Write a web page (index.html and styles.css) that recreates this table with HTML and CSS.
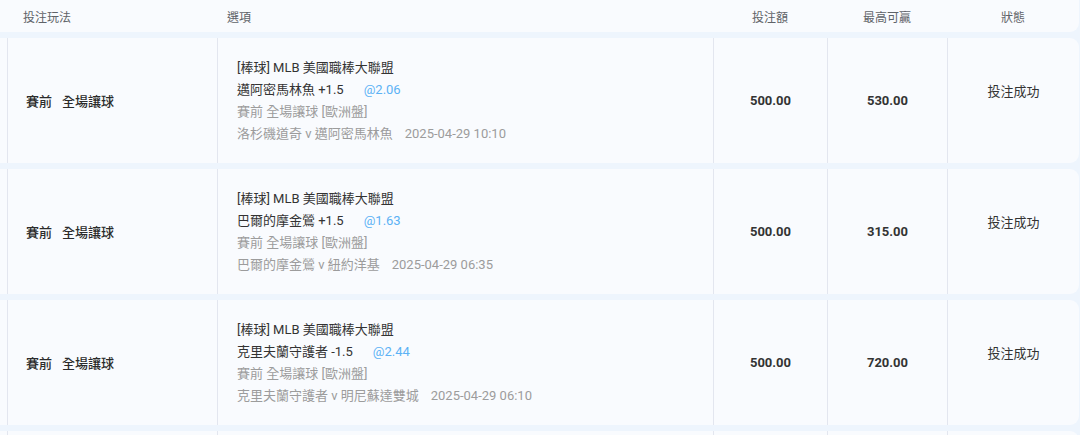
FILE: index.html
```html
<!DOCTYPE html>
<html lang="zh-Hant">
<head>
<meta charset="utf-8">
<title>投注紀錄</title>
<link rel="stylesheet" href="styles.css">
</head>
<body>
<div class="table">
  <div class="head">
    <div class="hc hc-edge"></div>
    <div class="hc hc-type">投注玩法</div>
    <div class="hc hc-opt">選項</div>
    <div class="hc hc-center">投注額</div>
    <div class="hc hc-center">最高可贏</div>
    <div class="hc hc-center">狀態</div>
  </div>

  <div class="row">
    <div class="cell edge"></div>
    <div class="cell type"><span>賽前</span><span class="gap">全場讓球</span></div>
    <div class="cell opt">
      <div class="line dark">[棒球] MLB 美國職棒大聯盟</div>
      <div class="line dark">邁阿密馬林魚 +1.5<span class="odds">@2.06</span></div>
      <div class="line grey">賽前 全場讓球 [歐洲盤]</div>
      <div class="line grey">洛杉磯道奇 v 邁阿密馬林魚<span class="date">2025-04-29 10:10</span></div>
    </div>
    <div class="cell amt">500.00</div>
    <div class="cell amt">530.00</div>
    <div class="cell status">投注成功</div>
  </div>

  <div class="row">
    <div class="cell edge"></div>
    <div class="cell type"><span>賽前</span><span class="gap">全場讓球</span></div>
    <div class="cell opt">
      <div class="line dark">[棒球] MLB 美國職棒大聯盟</div>
      <div class="line dark">巴爾的摩金鶯 +1.5<span class="odds">@1.63</span></div>
      <div class="line grey">賽前 全場讓球 [歐洲盤]</div>
      <div class="line grey">巴爾的摩金鶯 v 紐約洋基<span class="date">2025-04-29 06:35</span></div>
    </div>
    <div class="cell amt">500.00</div>
    <div class="cell amt">315.00</div>
    <div class="cell status">投注成功</div>
  </div>

  <div class="row">
    <div class="cell edge"></div>
    <div class="cell type"><span>賽前</span><span class="gap">全場讓球</span></div>
    <div class="cell opt">
      <div class="line dark">[棒球] MLB 美國職棒大聯盟</div>
      <div class="line dark">克里夫蘭守護者 -1.5<span class="odds">@2.44</span></div>
      <div class="line grey">賽前 全場讓球 [歐洲盤]</div>
      <div class="line grey">克里夫蘭守護者 v 明尼蘇達雙城<span class="date">2025-04-29 06:10</span></div>
    </div>
    <div class="cell amt">500.00</div>
    <div class="cell amt">720.00</div>
    <div class="cell status">投注成功</div>
  </div>

  <div class="row">
    <div class="cell edge"></div>
    <div class="cell type"></div>
    <div class="cell opt"></div>
    <div class="cell amt"></div>
    <div class="cell amt"></div>
    <div class="cell status"></div>
  </div>
</div>
</body>
</html>
```

FILE: styles.css
```css
html, body {
  margin: 0;
  padding: 0;
  background: #eef5fd;
  overflow: hidden;
}

body {
  font-family: Roboto, "Noto Sans CJK TC", "Noto Sans", sans-serif;
  font-size: 13px;
  color: #333333;
}

.table {
  width: 1079px;
  display: flex;
  flex-direction: column;
  gap: 6px;
}

.head,
.row {
  display: grid;
  grid-template-columns: 7px 210px 496px 114px 120px 1fr;
  background: #f9fbfe;
}

.head {
  height: 32px;
  border-radius: 0 0 9px 0;
  align-items: center;
  font-size: 12px;
  color: #5f6368;
}

.hc-type { padding-left: 16px; }
.hc-opt { padding-left: 10px; }
.hc-center { text-align: center; }

.row {
  height: 125px;
  border-radius: 0 9px 9px 0;
}

.cell {
  border-left: 1px solid #e3e6ef;
  display: flex;
  align-items: center;
}

.cell.edge {
  border-left: none;
}

.type {
  padding-left: 18px;
  font-weight: 500;
  color: #2b2b2b;
}

.type .gap {
  margin-left: 10px;
}

.opt {
  padding-left: 19px;
  flex-direction: column;
  align-items: flex-start;
  justify-content: center;
}

.line {
  line-height: 22px;
  white-space: nowrap;
}

.dark { color: #333333; }
.grey { color: #9c9c9c; }

.odds {
  color: #5cb2f5;
  margin-left: 20px;
}

.date {
  margin-left: 12px;
}

.amt {
  justify-content: center;
  font-weight: 700;
  color: #333333;
}

.status {
  justify-content: center;
  padding-bottom: 21px;
  box-sizing: border-box;
  color: #333333;
}
```
